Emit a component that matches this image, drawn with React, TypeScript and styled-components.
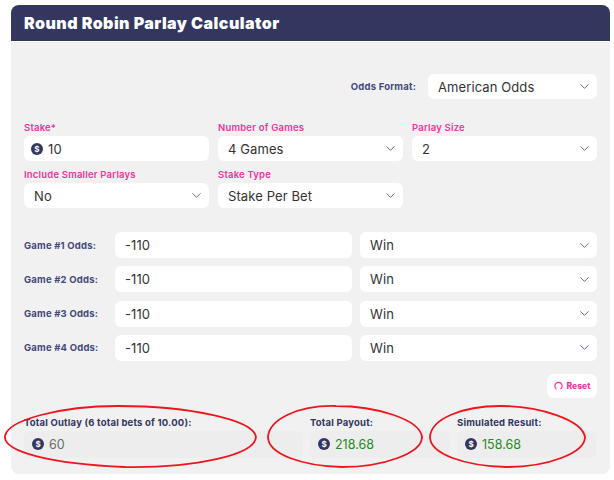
import React from 'react';
import styled, { createGlobalStyle } from 'styled-components';
import { ChevronDown } from 'lucide-react';

const Global = createGlobalStyle`
  html, body {
    margin: 0;
    background: #ffffff;
    font-family: 'Inter', 'Liberation Sans', sans-serif;
  }
`;

const Page = styled.div`
  position: relative;
  width: 614px;
  height: 480px;
  padding: 5px 4px 0 11px;
  box-sizing: border-box;
  overflow: hidden;
`;

const Card = styled.div`
  height: 469px;
  border-radius: 8px;
  background: #f1f1f1;
  overflow: hidden;
`;

const Header = styled.div`
  height: 37px;
  padding-left: 13px;
  display: flex;
  align-items: center;
  background: #33375f;
  border-bottom: 1px solid #ffffff;
  box-sizing: border-box;
  color: #ffffff;
  font-size: 16px;
  font-weight: 900;
  letter-spacing: 0.47px;
`;

const Body = styled.div`
  padding: 32px 13px 0;
  display: flex;
  flex-direction: column;
`;

const FormatRow = styled.div`
  display: flex;
  justify-content: flex-end;
  align-items: center;
  gap: 12px;
  margin-bottom: 23px;
`;

const DarkLabel = styled.span`
  color: #45497a;
  font-size: 9.5px;
  font-weight: 700;
  letter-spacing: 0.2px;
`;

const FieldGrid = styled.div`
  display: grid;
  grid-template-columns: repeat(3, 185px);
  column-gap: 9px;
  row-gap: 8px;
  margin-bottom: 24px;
`;

const Field = styled.div`
  display: flex;
  flex-direction: column;
`;

const PinkLabel = styled.label`
  height: 14px;
  color: #f0359c;
  font-size: 9.5px;
  font-weight: 600;
  line-height: 11px;
  letter-spacing: 0.2px;
`;

const Control = styled.div<{ $width?: number; $height?: number }>`
  width: ${(p) => (p.$width ? `${p.$width}px` : 'auto')};
  height: ${(p) => p.$height ?? 25}px;
  padding: 0 5px 0 10px;
  display: flex;
  align-items: center;
  justify-content: space-between;
  background: #ffffff;
  border-radius: 6px;
  box-sizing: border-box;
  color: #333333;
  font-size: 13px;
  letter-spacing: 0.1px;
`;

const MoneyInput = styled(Control)`
  justify-content: flex-start;
  gap: 5px;
  padding: 0 7px;
`;

const Coin = styled.span`
  width: 12px;
  height: 12px;
  flex: none;
  display: flex;
  align-items: center;
  justify-content: center;
  border-radius: 50%;
  background: #33375f;
  color: #ffffff;
  font-size: 8px;
  font-weight: 700;
`;

const Arrow = styled(ChevronDown)`
  width: 15px;
  height: 15px;
  flex: none;
  color: #45497a;
`;

const GameList = styled.div`
  display: flex;
  flex-direction: column;
  gap: 8.33px;
`;

const GameRow = styled.div`
  display: grid;
  grid-template-columns: 83px 237px 237px;
  column-gap: 8px;
  align-items: center;
`;

const ResetRow = styled.div`
  display: flex;
  justify-content: flex-end;
  margin: 13px 0 18px;
`;

const ResetButton = styled.button`
  width: 50px;
  height: 24px;
  padding: 0;
  display: flex;
  align-items: center;
  justify-content: center;
  gap: 4px;
  background: #ffffff;
  border: none;
  border-radius: 7px;
  color: #f0359c;
  font-family: inherit;
  font-size: 8.5px;
  font-weight: 800;
`;

const Totals = styled.div`
  display: grid;
  grid-template-columns: 279px 140px 139px;
  column-gap: 7px;
`;

const TotalLabel = styled.div`
  height: 15px;
  color: #33375f;
  font-size: 9.5px;
  font-weight: 700;
  line-height: 13px;
  letter-spacing: 0.2px;
  white-space: nowrap;
`;

const TotalValue = styled.div<{ $positive?: boolean }>`
  height: 27px;
  padding: 0 8px;
  display: flex;
  align-items: center;
  gap: 5px;
  background: #ededed;
  border-radius: 6px;
  color: ${(p) => (p.$positive ? '#1f8a24' : '#6b6b6b')};
  font-size: 12.5px;
`;

const Annotations = styled.svg`
  position: absolute;
  left: 0;
  top: 0;
  pointer-events: none;
`;

const Select = ({ value, width, height }: { value: string; width?: number; height?: number }) => (
  <Control $width={width} $height={height}>
    <span>{value}</span>
    <Arrow strokeWidth={1.3} />
  </Control>
);

const games = [1, 2, 3, 4];

export default function App() {
  return (
    <Page>
      <Global />
      <Card>
        <Header>Round Robin Parlay Calculator</Header>
        <Body>
          <FormatRow>
            <DarkLabel>Odds Format:</DarkLabel>
            <Select value="American Odds" width={169} />
          </FormatRow>
          <FieldGrid>
            <Field>
              <PinkLabel>Stake*</PinkLabel>
              <MoneyInput>
                <Coin>$</Coin>
                10
              </MoneyInput>
            </Field>
            <Field>
              <PinkLabel>Number of Games</PinkLabel>
              <Select value="4 Games" />
            </Field>
            <Field>
              <PinkLabel>Parlay Size</PinkLabel>
              <Select value="2" />
            </Field>
            <Field>
              <PinkLabel>Include Smaller Parlays</PinkLabel>
              <Select value="No" />
            </Field>
            <Field>
              <PinkLabel>Stake Type</PinkLabel>
              <Select value="Stake Per Bet" />
            </Field>
          </FieldGrid>
          <GameList>
            {games.map((game) => (
              <GameRow key={game}>
                <DarkLabel>Game #{game} Odds:</DarkLabel>
                <Control $height={26}>-110</Control>
                <Select value="Win" height={26} />
              </GameRow>
            ))}
          </GameList>
          <ResetRow>
            <ResetButton>
              <svg width="9" height="9" viewBox="0 0 10 10" fill="none">
                <path d="M2.4 8.6A4 4 0 1 1 7.6 8.6" stroke="#f0359c" strokeWidth="1.3" strokeLinecap="round" />
              </svg>
              Reset
            </ResetButton>
          </ResetRow>
          <Totals>
            <div>
              <TotalLabel>Total Outlay (6 total bets of 10.00):</TotalLabel>
              <TotalValue>
                <Coin>$</Coin>
                60
              </TotalValue>
            </div>
            <div>
              <TotalLabel>Total Payout:</TotalLabel>
              <TotalValue $positive>
                <Coin>$</Coin>
                218.68
              </TotalValue>
            </div>
            <div>
              <TotalLabel>Simulated Result:</TotalLabel>
              <TotalValue $positive>
                <Coin>$</Coin>
                158.68
              </TotalValue>
            </div>
          </Totals>
        </Body>
      </Card>
      <Annotations width="614" height="480" viewBox="0 0 614 480" fill="none" stroke="#f0141e" strokeWidth="1.8">
        <path d="M256 437C254 420 190 406 118 406C60 406 8 420 5 436C3 452 52 464 125 467C195 468 255 455 256 437Z" />
        <path d="M422 437C420 419 375 406 336 406C297 405 269 420 268 437C268 454 302 466 342 467C384 467 422 453 422 437Z" />
        <path d="M585 437C582 420 540 406 500 406C462 406 431 419 430 437C430 454 465 466 506 467C548 467 585 453 585 437Z" />
      </Annotations>
    </Page>
  );
}
